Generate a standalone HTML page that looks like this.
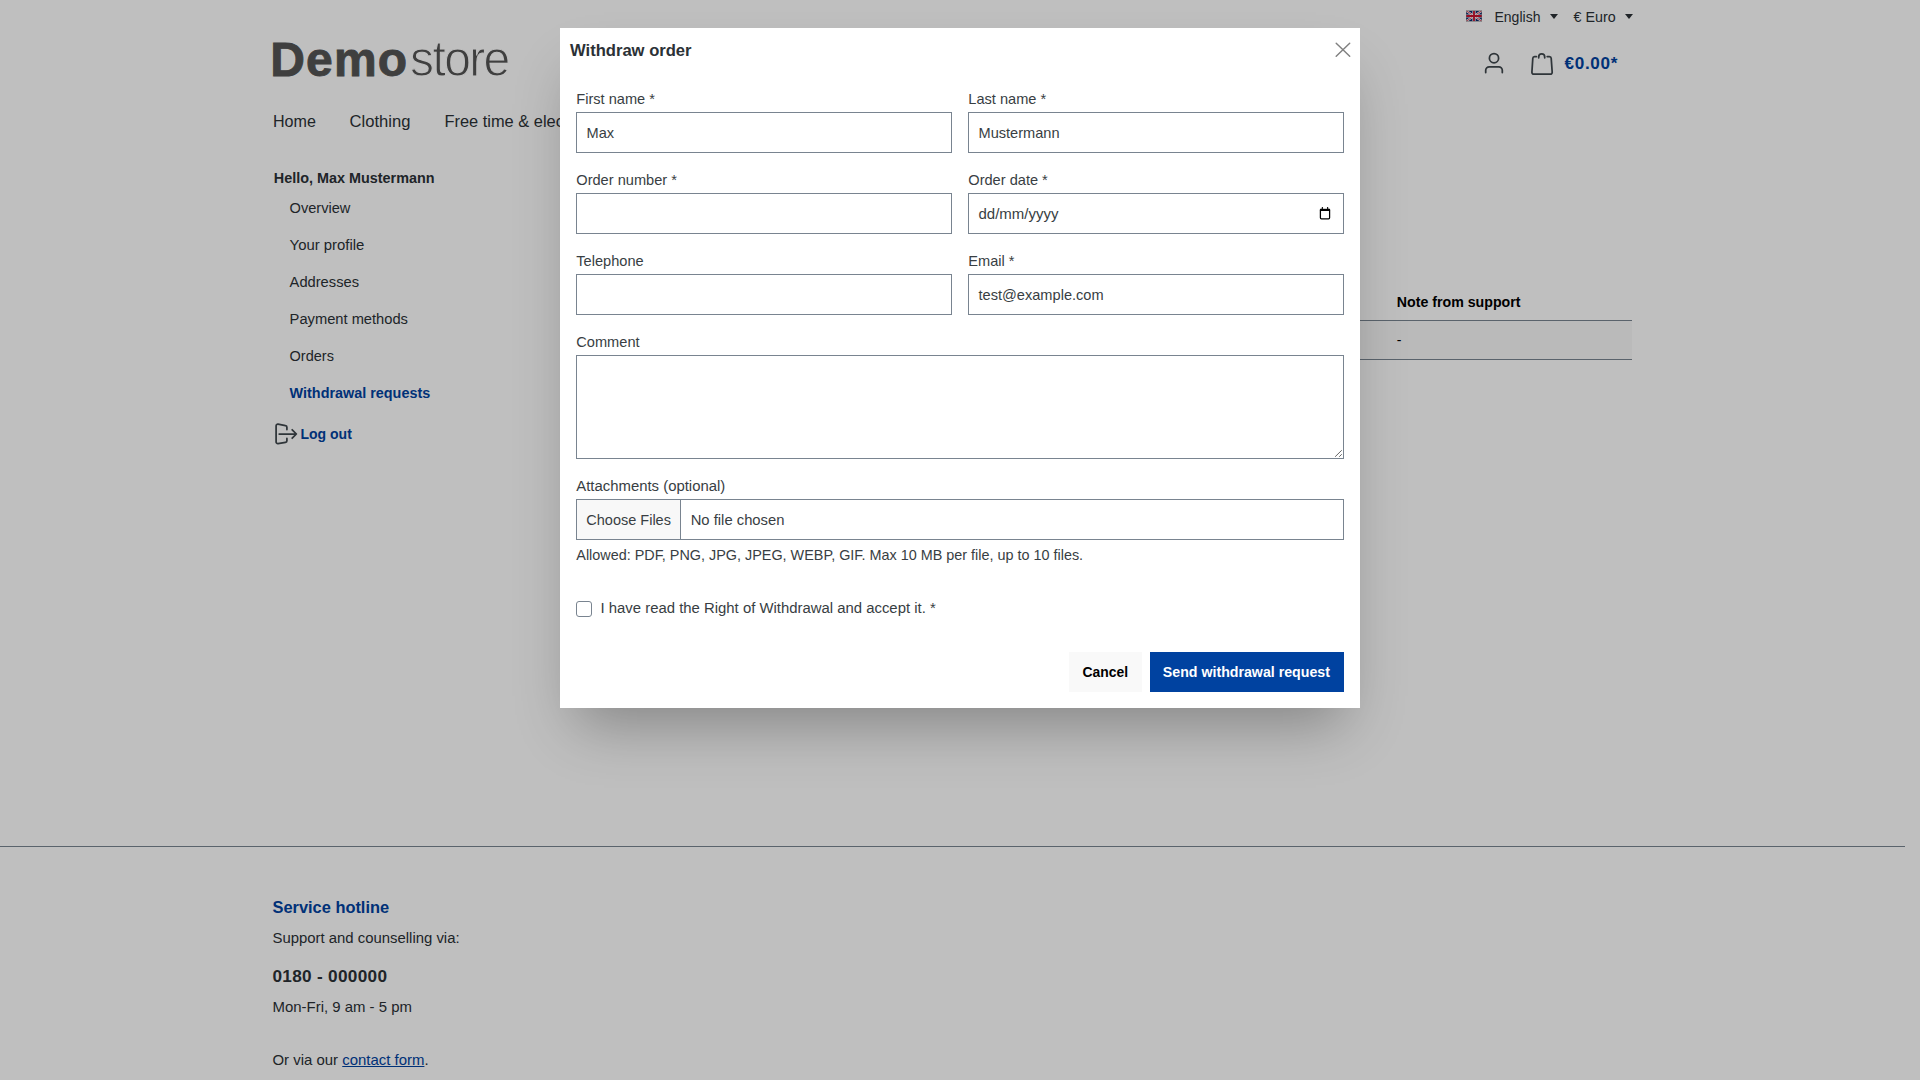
<!DOCTYPE html>
<html><head><meta charset="utf-8"><title>Withdraw order</title>
<style>
html,body{margin:0;padding:0}
body{width:1920px;height:1080px;overflow:hidden;background:#fff;font-family:"Liberation Sans",sans-serif;position:relative}
.t{position:absolute;white-space:nowrap;line-height:20px}
#ov{position:absolute;left:0;top:0;width:1920px;height:1080px;background:rgba(0,0,0,.25)}
#modal{position:absolute;left:560px;top:28px;width:800px;height:680px;background:#fff;box-shadow:0 32px 56px -16px rgba(0,0,0,.3)}
#mi{position:absolute;left:-560px;top:-28px;width:1920px;height:1080px}
</style></head><body>
<svg style="position:absolute;left:1466px;top:10px" width="16" height="12" viewBox="0 0 60 40"><clipPath id="fc"><rect width="60" height="40"/></clipPath><g clip-path="url(#fc)"><rect width="60" height="40" fill="#012169"/><path d="M0,0 60,40 M60,0 0,40" stroke="#fff" stroke-width="8"/><path d="M0,0 60,40 M60,0 0,40" stroke="#C8102E" stroke-width="3"/><path d="M30,0v40M0,20h60" stroke="#fff" stroke-width="12"/><path d="M30,0v40M0,20h60" stroke="#C8102E" stroke-width="7"/></g><rect x="0.5" y="0.5" width="59" height="39" fill="none" stroke="#888" stroke-width="2"/></svg>
<div class="t" style="left:1494.5px;top:6.95px;font-size:14px;color:#2b3136;">English</div>
<div style="position:absolute;left:1550px;top:14px;width:0;height:0;border-left:4px solid transparent;border-right:4px solid transparent;border-top:5px solid #2b3136"></div>
<div class="t" style="left:1573.5px;top:6.85px;font-size:14.3px;color:#2b3136;">€ Euro</div>
<div style="position:absolute;left:1625px;top:14px;width:0;height:0;border-left:4px solid transparent;border-right:4px solid transparent;border-top:5px solid #2b3136"></div>
<div class="t" style="left:270.2px;top:50.07px;font-size:48px;font-weight:700;letter-spacing:1.2px;color:#555555;-webkit-text-stroke:0.9px #555555;">Demo</div>
<div class="t" style="left:410.0px;top:50.07px;font-size:48px;letter-spacing:-1.6px;color:#555555;-webkit-text-stroke:1.0px #ffffff;transform:scaleY(1.06);transform-origin:0 22.3px;">store</div>
<svg style="position:absolute;left:1480px;top:50px" width="28" height="28" viewBox="0 0 28 28" fill="none" stroke="#3f474d" stroke-width="1.75" stroke-linecap="round"><circle cx="14" cy="8.2" r="4.6"/><path d="M5.7,22.6 V20.3 a3.5,3.5 0 0 1 3.5,-3.5 H18.8 a3.5,3.5 0 0 1 3.5,3.5 V22.6"/></svg>
<svg style="position:absolute;left:1528px;top:50px" width="28" height="28" viewBox="0 0 28 28" fill="none" stroke="#3f474d" stroke-width="1.75" stroke-linejoin="round" stroke-linecap="round"><path d="M8.4,6.6 H6.6 a1.8,1.8 0 0 0 -1.8,1.7 L3.9,22.2 a1.8,1.8 0 0 0 1.8,1.9 H22.4 a1.8,1.8 0 0 0 1.8,-1.9 L23.2,8.3 a1.8,1.8 0 0 0 -1.8,-1.7 H19.2 M10.7,7.8 V6.9 a3,3 0 0 1 6,0 V7.8"/></svg>
<div class="t" style="left:1564.5px;top:53.67px;font-size:17.1px;font-weight:700;letter-spacing:0.7px;color:#0042a0;">€0.00*</div>
<div class="t" style="left:273.0px;top:111.22px;font-size:16.1px;color:#2b3136;">Home</div>
<div class="t" style="left:349.6px;top:111.95px;font-size:16.6px;color:#2b3136;">Clothing</div>
<div class="t" style="left:444.5px;top:110.92px;font-size:16.4px;color:#2b3136;">Free time &amp; electronics</div>
<div class="t" style="left:273.8px;top:167.81px;font-size:14.4px;font-weight:700;color:#2b3136;">Hello, Max Mustermann</div>
<div class="t" style="left:289.6px;top:197.94px;font-size:14.6px;color:#2b3136;">Overview</div>
<div class="t" style="left:289.6px;top:234.84px;font-size:14.9px;color:#2b3136;">Your profile</div>
<div class="t" style="left:289.6px;top:271.91px;font-size:14.7px;color:#2b3136;">Addresses</div>
<div class="t" style="left:289.6px;top:308.91px;font-size:14.7px;color:#2b3136;">Payment methods</div>
<div class="t" style="left:289.6px;top:345.98px;font-size:14.5px;color:#2b3136;">Orders</div>
<div class="t" style="left:289.6px;top:383.01px;font-size:14.4px;font-weight:700;color:#0042a0;">Withdrawal requests</div>
<svg style="position:absolute;left:272px;top:422px" width="28" height="24" viewBox="0 0 28 24" fill="none" stroke="#3f474d" stroke-width="1.75" stroke-linecap="round" stroke-linejoin="round"><path d="M14.9,7.6 V5.3 a1.6,1.6 0 0 0 -1.4,-1.6 L6,2.2 a1.7,1.7 0 0 0 -1.9,1.7 V19.9 a1.7,1.7 0 0 0 1.9,1.7 L13.5,20.3 a1.6,1.6 0 0 0 1.4,-1.6 V16.4"/><path d="M7.2,12 H24.2 M20.2,7.8 L24.4,12 L20.2,16.2"/></svg>
<div class="t" style="left:300.5px;top:423.85px;font-size:14px;font-weight:700;color:#0042a0;">Log out</div>
<div style="position:absolute;left:560px;top:320px;width:1072px;height:1px;background:#798490"></div>
<div style="position:absolute;left:560px;top:321px;width:1072px;height:38px;background:#f9f9f9"></div>
<div style="position:absolute;left:560px;top:359px;width:1072px;height:1px;background:#798490"></div>
<div class="t" style="left:1396.8px;top:292.08px;font-size:14.2px;font-weight:700;color:#000;">Note from support</div>
<div class="t" style="left:1396.8px;top:329.65px;font-size:14px;color:#000;">-</div>
<div style="position:absolute;left:0;top:846px;width:1905px;height:1px;background:#798490"></div>
<div class="t" style="left:272.5px;top:897.22px;font-size:16.4px;font-weight:700;color:#0042a0;">Service hotline</div>
<div class="t" style="left:272.5px;top:927.64px;font-size:14.9px;color:#2b3136;">Support and counselling via:</div>
<div class="t" style="left:272.5px;top:965.84px;font-size:17.2px;font-weight:700;letter-spacing:0.3px;color:#2b3136;">0180 - 000000</div>
<div class="t" style="left:272.5px;top:996.52px;font-size:14.95px;color:#2b3136;">Mon-Fri, 9 am - 5 pm</div>
<div class="t" style="left:272.5px;top:1049.82px;font-size:14.95px;color:#2b3136;">Or via our <span style="color:#0042a0;text-decoration:underline">contact form</span>.</div>
<div id="ov"></div>
<div id="modal"><div id="mi">
<div class="t" style="left:570.0px;top:40.85px;font-size:16.6px;font-weight:700;color:#2b3136;">Withdraw order</div>
<svg style="position:absolute;left:1335px;top:42px" width="16" height="16" viewBox="0 0 16 16" stroke="#808080" stroke-width="1.45" stroke-linecap="round"><path d="M1.2,1.3 L14.7,14.3 M14.7,1.3 L1.2,14.3"/></svg>
<div class="t" style="left:576.3px;top:88.94px;font-size:14.6px;color:#383e43;">First name *</div>
<div class="t" style="left:968.3px;top:88.94px;font-size:14.6px;color:#383e43;">Last name *</div>
<div style="position:absolute;left:576px;top:112px;width:374px;height:39px;border:1px solid #798490;background:#fff;"></div>
<div style="position:absolute;left:968px;top:112px;width:374px;height:39px;border:1px solid #798490;background:#fff;"></div>
<div class="t" style="left:576.3px;top:169.94px;font-size:14.6px;color:#383e43;">Order number *</div>
<div class="t" style="left:968.3px;top:169.94px;font-size:14.6px;color:#383e43;">Order date *</div>
<div style="position:absolute;left:576px;top:193px;width:374px;height:39px;border:1px solid #798490;background:#fff;"></div>
<div style="position:absolute;left:968px;top:193px;width:374px;height:39px;border:1px solid #798490;background:#fff;"></div>
<div class="t" style="left:576.3px;top:250.94px;font-size:14.6px;color:#383e43;">Telephone</div>
<div class="t" style="left:968.3px;top:250.94px;font-size:14.6px;color:#383e43;">Email *</div>
<div style="position:absolute;left:576px;top:274px;width:374px;height:39px;border:1px solid #798490;background:#fff;"></div>
<div style="position:absolute;left:968px;top:274px;width:374px;height:39px;border:1px solid #798490;background:#fff;"></div>
<div class="t" style="left:586.5px;top:123.04px;font-size:14.6px;color:#383e43;">Max</div>
<div class="t" style="left:978.5px;top:123.04px;font-size:14.6px;color:#383e43;">Mustermann</div>
<div class="t" style="left:978.5px;top:204.40px;font-size:15px;color:#383e43;">dd/mm/yyyy</div>
<svg style="position:absolute;left:1319px;top:206px" width="12" height="14" viewBox="0 0 12 14" fill="none" stroke="#000"><path d="M1.4,4.2 V11.8 a1,1 0 0 0 1,1 H9.6 a1,1 0 0 0 1,-1 V4.2" stroke-width="1.25"/><path d="M0.9,3.9 H11.1" stroke-width="2.2"/><path d="M3.2,3 L3.5,1.2 M8.8,3 L8.5,1.2" stroke-width="1.2"/></svg>
<div class="t" style="left:978.5px;top:284.54px;font-size:14.6px;color:#383e43;">test@example.com</div>
<div class="t" style="left:576.3px;top:331.94px;font-size:14.6px;color:#383e43;">Comment</div>
<div style="position:absolute;left:576px;top:355px;width:766px;height:102px;border:1px solid #798490;background:#fff;"></div>
<svg style="position:absolute;left:1332px;top:447px" width="11" height="11" viewBox="0 0 11 11" stroke="#555" stroke-width="0.9" stroke-linecap="round"><path d="M3.4,9.5 L9.5,3.5 M7.5,9.5 L9.5,7.5"/></svg>
<div class="t" style="left:576.3px;top:475.84px;font-size:14.9px;color:#383e43;">Attachments (optional)</div>
<div style="position:absolute;left:576px;top:499px;width:766px;height:39px;border:1px solid #798490;background:#fff;"></div>
<div style="position:absolute;left:577px;top:500px;width:103px;height:39px;background:#f8f8f8;border-right:1px solid #798490"></div>
<div class="t" style="left:586.3px;top:509.98px;font-size:14.5px;color:#383e43;">Choose Files</div>
<div class="t" style="left:690.7px;top:509.87px;font-size:14.8px;color:#383e43;">No file chosen</div>
<div class="t" style="left:576.3px;top:544.76px;font-size:14.4px;color:#383e43;">Allowed: PDF, PNG, JPG, JPEG, WEBP, GIF. Max 10 MB per file, up to 10 files.</div>
<div style="position:absolute;left:576px;top:601px;width:14px;height:14px;border:1px solid #798490;border-radius:3px;background:#fff"></div>
<div class="t" style="left:600.5px;top:597.84px;font-size:14.9px;color:#383e43;">I have read the Right of Withdrawal and accept it. *</div>
<div style="position:absolute;left:1069px;top:652px;width:73px;height:40px;background:#f9f9f9"></div>
<div class="t" style="left:1082.5px;top:662.38px;font-size:13.9px;font-weight:700;color:#000;">Cancel</div>
<div style="position:absolute;left:1150px;top:652px;width:194px;height:40px;background:#0042a0"></div>
<div class="t" style="left:1162.8px;top:662.28px;font-size:14.2px;font-weight:700;color:#fff;">Send withdrawal request</div>
</div></div>
</body></html>
